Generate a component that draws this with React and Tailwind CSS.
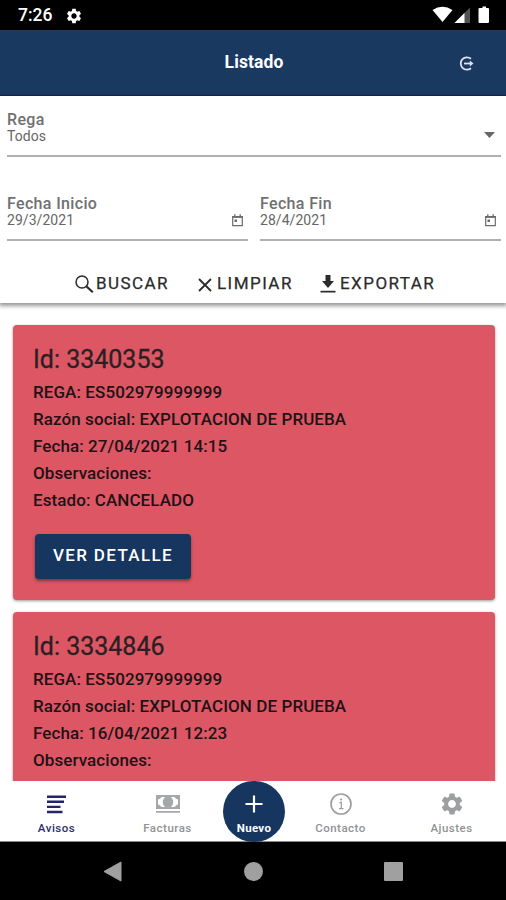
import React from 'react';
import { MdSettings } from 'react-icons/md';

const avisos = [
  {
    id: '3340353',
    rega: 'ES502979999999',
    razonSocial: 'EXPLOTACION DE PRUEBA',
    fecha: '27/04/2021 14:15',
    estado: 'CANCELADO',
  },
  {
    id: '3334846',
    rega: 'ES502979999999',
    razonSocial: 'EXPLOTACION DE PRUEBA',
    fecha: '16/04/2021 12:23',
  },
];

function StatusBar() {
  return (
    <div className="h-[30px] shrink-0 bg-black flex items-center justify-between pl-[18px] pr-[16px] text-white">
      <div className="flex items-center gap-[13px] pt-px">
        <span className="text-[17.5px] leading-none font-medium">7:26</span>
        <MdSettings size={18} />
      </div>
      <svg width="58" height="18" viewBox="0 0 58 18" fill="#fff">
        <path d="M0.5 4Q10.5 -2.5 20.5 4L10.5 16z" />
        <path d="M38 1.5V17H22.5z" opacity="0.32" />
        <path d="M32.500 7V17H22.5z" />
        <path d="M48.500 2H50.500V0.500H54V2H56Q57 2 57 3V16Q57 17 56 17H47.500Q46.500 17 46.500 16V3Q46.500 2 47.500 2z" />
      </svg>
    </div>
  );
}

function Header() {
  return (
    <header className="h-[66px] shrink-0 bg-[#1a3960] border-b border-[#0f2c50] grid grid-cols-3 items-center text-white">
      <span />
      <h1 className="text-center text-[17.5px] leading-none font-bold tracking-[0.1px] pl-[2px]">Listado</h1>
      <button className="justify-self-end mr-[31px] mt-px">
        <svg width="17" height="17" viewBox="0 0 17 17" fill="none" stroke="#d9e2f0" strokeWidth="1.8">
          <path d="M13 3.800A6.200 6.200 0 1 0 13 13.200" />
          <path d="M6 8.500H13" />
          <path d="M11.800 5.500L15.500 8.500L11.800 11.500z" fill="#d9e2f0" stroke="none" />
        </svg>
      </button>
    </header>
  );
}

function CalendarIcon() {
  return (
    <svg width="11" height="13" viewBox="0 0 11 13" fill="none" stroke="#6a6a6a">
      <path d="M0.700 2.500H10.300V11.700H0.700z" strokeWidth="1.2" />
      <path d="M0.500 3H10.500" strokeWidth="1.800" />
      <path d="M2.800 0.300V2.500M8.200 0.300V2.500" strokeWidth="1.300" />
      <path d="M2.500 5.500H5V8H2.500z" fill="#6a6a6a" stroke="none" />
    </svg>
  );
}

function Field({ label, value, icon }) {
  return (
    <div className="flex-1 h-[48px] border-b-2 border-[#b0b0b0] flex justify-between">
      <div className="pt-[2px]">
        <div className="text-[16px] leading-[17px] font-medium tracking-[0.35px] text-[#707070]">{label}</div>
        <div className="text-[14px] leading-[16px] tracking-[0.05px] text-[#666]">{value}</div>
      </div>
      {icon}
    </div>
  );
}

function Filters() {
  return (
    <section className="relative z-10 h-[207px] shrink-0 bg-white shadow-[0_2px_4px_1px_rgba(0,0,0,0.4)]">
      <div className="flex pt-[13px] pl-[7px] pr-[5px]">
        <Field
          label="Rega"
          value="Todos"
          icon={
            <svg className="mt-[23px] mr-[6px]" width="11" height="6" viewBox="0 0 11 6">
              <path d="M0 0H11L5.500 6z" fill="#666" />
            </svg>
          }
        />
      </div>
      <div className="flex gap-[12px] pt-[36px] pl-[7px] pr-[5px]">
        <Field label="Fecha Inicio" value="29/3/2021" icon={<div className="pt-[21px] pr-[5px]"><CalendarIcon /></div>} />
        <Field label="Fecha Fin" value="28/4/2021" icon={<div className="pt-[21px] pr-[5px]"><CalendarIcon /></div>} />
      </div>
      <div className="flex pl-[75px] pt-[31px] text-[17px] leading-[22px] tracking-[1.45px] text-[#2b2b2b] [-webkit-text-stroke:0.25px_#2b2b2b]">
        <button className="flex items-center w-[123px]">
          <svg className="mr-[2px] mt-[2px]" width="19" height="19" viewBox="0 0 19 19" fill="none" stroke="#2b2b2b">
            <circle cx="7" cy="7" r="6" strokeWidth="1.5" />
            <path d="M11.300 11.300L17.800 17.300" strokeWidth="2.200" />
          </svg>
          BUSCAR
        </button>
        <button className="flex items-center w-[122px]">
          <svg className="mr-[5px] mt-[3px]" width="14" height="14" viewBox="0 0 14 14" stroke="#2b2b2b" strokeWidth="1.800">
            <path d="M1 1L13 13M13 1L1 13" />
          </svg>
          LIMPIAR
        </button>
        <button className="flex items-center">
          <svg className="mr-[4px] mt-[2px]" width="16" height="18" viewBox="0 0 16 18" fill="#2b2b2b">
            <path d="M5.500 0H10.500V6H14L8 13L2 6H5.500z" />
            <path d="M0.500 15.800H15.500V17.500H0.500z" />
          </svg>
          EXPORTAR
        </button>
      </div>
    </section>
  );
}

function AvisoCard({ aviso }) {
  return (
    <article className="h-[275px] shrink-0 rounded-[4px] bg-[#dc5664] pl-[20px] pt-[20px] text-[#1f1216] shadow-[0_1px_3px_rgba(0,0,0,0.4)]">
      <h2 className="text-[25px] leading-[30px] text-[#2a2023] [-webkit-text-stroke:0.3px_#2a2023]">Id: {aviso.id}</h2>
      <div className="pt-[4px] text-[17px] leading-[27.1px] font-medium tracking-[0.08px]">
        <p>REGA: {aviso.rega}</p>
        <p>Razón social: {aviso.razonSocial}</p>
        <p>Fecha: {aviso.fecha}</p>
        <p>Observaciones:</p>
        {aviso.estado && <p>Estado: {aviso.estado}</p>}
      </div>
      {aviso.estado && (
        <button className="ml-[2px] mt-[20px] w-[156px] h-[45px] rounded-[4px] bg-[#16365f] text-white text-[17px] font-medium tracking-[1.35px] pb-[2px] shadow-[0_2px_3px_rgba(0,0,0,0.4)]">
          VER DETALLE
        </button>
      )}
    </article>
  );
}

function Tab({ label, active, children }) {
  return (
    <button
      className={`flex flex-col items-center text-[11.5px] leading-[14px] font-medium tracking-[0.5px] ${
        active ? 'text-[#2b2f68]' : 'text-[#909294]'
      }`}
    >
      <span className="h-[26px] mt-[10px] flex items-center justify-center">{children}</span>
      <span className="mt-[4px]">{label}</span>
    </button>
  );
}

function TabBar() {
  return (
    <nav className="h-[61px] shrink-0 bg-white border-b border-[#8a8a8a] pl-px grid grid-cols-[111px_111px_62px_111px_111px]">
      <Tab label="Avisos" active>
        <svg width="19" height="19" viewBox="0 0 19 19" fill="#252765">
          <path d="M0 0.500H19V3H0zM0 5.600H17V8H0zM0 10.700H13.500V13H0zM0 15.800H15.500V18.200H0z" />
        </svg>
      </Tab>
      <Tab label="Facturas">
        <svg width="24" height="18" viewBox="0 0 24 18">
          <path d="M0 0H24V14H0zM0 16H24V17.800H0z" fill="#a5a7a9" />
          <path d="M9 2H5.500Q4.500 4 2 4.500V9.500Q4.500 10 5.500 12H9Q4.500 7 9 2zM15 2H18.500Q19.500 4 22 4.500V9.500Q19.500 10 18.500 12H15Q19.500 7 15 2z" fill="#fff" />
        </svg>
      </Tab>
      <button className="w-[62px] h-[61px] rounded-full bg-[#16365f] text-white flex flex-col items-center text-[11.5px] leading-[14px] font-bold">
        <svg className="mt-[14px]" width="18" height="18" viewBox="0 0 18 18" stroke="#fff" strokeWidth="2.200">
          <path d="M9 0.500V17.500M0.500 9H17.500" />
        </svg>
        <span className="mt-[8px] tracking-[0.3px]">Nuevo</span>
      </button>
      <Tab label="Contacto">
        <svg width="22" height="22" viewBox="0 0 22 22" fill="none" stroke="#9d9fa1">
          <circle cx="11" cy="11" r="10" strokeWidth="1.700" />
          <path d="M9.500 9.500H11.300V15.500M9 15.700H13.500" strokeWidth="1.300" />
          <circle cx="11" cy="6.500" r="1.100" fill="#9d9fa1" stroke="none" />
        </svg>
      </Tab>
      <Tab label="Ajustes">
        <MdSettings size={26} color="#9d9fa1" />
      </Tab>
    </nav>
  );
}

function SystemNav() {
  return (
    <div className="h-[58px] shrink-0 bg-black flex items-center pl-[103px]">
      <svg width="19" height="21" viewBox="0 0 19 21">
        <path d="M1 10.500L18 1V20z" fill="#a0a0a0" stroke="#a0a0a0" strokeLinejoin="round" />
      </svg>
      <span className="ml-[122px] w-[19px] h-[19px] rounded-full bg-[#a0a0a0]" />
      <span className="ml-[121px] w-[19px] h-[19px] rounded-[1px] bg-[#a0a0a0]" />
    </div>
  );
}

export default function App() {
  return (
    <div className="w-[506px] h-[900px] flex flex-col overflow-hidden bg-white font-['Roboto',sans-serif]">
      <StatusBar />
      <Header />
      <Filters />
      <main className="flex-1 min-h-0 overflow-hidden flex flex-col gap-[12px] pt-[22px] pl-[13px] pr-[11px]">
        {avisos.map((aviso) => (
          <AvisoCard key={aviso.id} aviso={aviso} />
        ))}
      </main>
      <TabBar />
      <SystemNav />
    </div>
  );
}
